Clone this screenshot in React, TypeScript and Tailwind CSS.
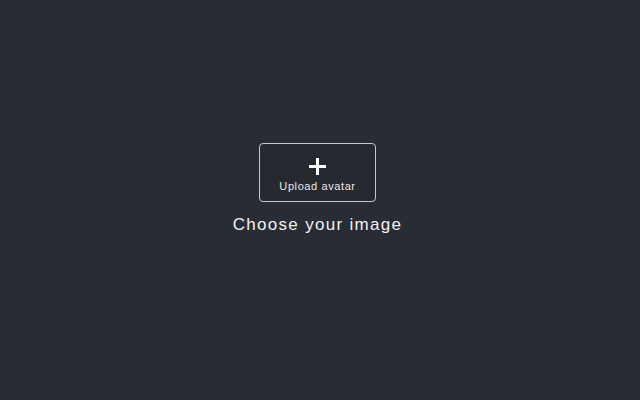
export default function App() {
  return (
    <div
      className="w-[640px] h-[400px] bg-[#282c34] flex flex-col items-center pt-[143px] pr-[5px]"
      style={{ fontFamily: '"Liberation Sans", Arial, sans-serif' }}
    >
      <div className="w-[117px] h-[59px] border border-[#c8c9cc] rounded-[4px] flex flex-col items-center pt-[14px] bg-[#26292f]">
        <svg width="17" height="17" viewBox="0 0 17 17" className="block">
          <rect x="7" y="0" width="3" height="17" fill="#ffffff" />
          <rect x="0" y="7" width="17" height="3" fill="#ffffff" />
        </svg>
        <div className="text-[11px] leading-[13px] tracking-[0.6px] text-[#e6e7e8] mt-[5px]">Upload avatar</div>
      </div>
      <div className="text-[17px] leading-[20px] tracking-[1.3px] text-[#f2f2f2] mt-[13px]">Choose your image</div>
    </div>
  );
}
